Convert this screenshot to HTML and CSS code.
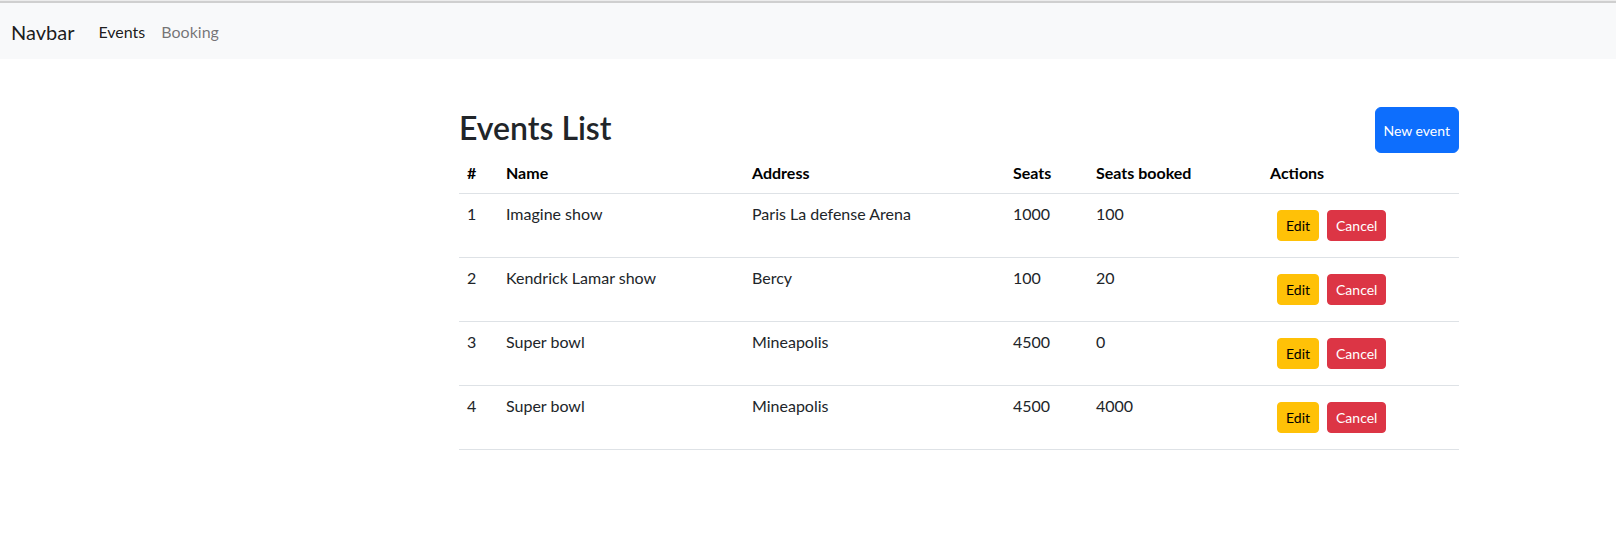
FILE: index.html
```html
<!DOCTYPE html>
<html lang="en">
<head>
<meta charset="utf-8">
<title>Events</title>
<link rel="stylesheet" href="styles.css">
</head>
<body>
<div class="topline"></div>
<nav class="navbar">
  <a class="brand" href="#">Navbar</a>
  <ul class="nav">
    <li><a class="nav-link active" href="#">Events</a></li>
    <li><a class="nav-link" href="#">Booking</a></li>
  </ul>
</nav>
<main class="page">
  <div class="content">
    <div class="title-row">
      <h2 class="title">Events List</h2>
      <button class="btn btn-primary">New event</button>
    </div>
    <table class="table">
      <colgroup>
        <col class="c-num"><col class="c-name"><col class="c-addr"><col class="c-seats"><col class="c-booked"><col class="c-actions">
      </colgroup>
      <thead>
        <tr><th>#</th><th>Name</th><th>Address</th><th>Seats</th><th>Seats booked</th><th>Actions</th></tr>
      </thead>
      <tbody>
        <tr><td>1</td><td>Imagine show</td><td>Paris La defense Arena</td><td>1000</td><td>100</td><td><div class="actions"><button class="btn btn-sm btn-warning">Edit</button><button class="btn btn-sm btn-danger">Cancel</button></div></td></tr>
        <tr><td>2</td><td>Kendrick Lamar show</td><td>Bercy</td><td>100</td><td>20</td><td><div class="actions"><button class="btn btn-sm btn-warning">Edit</button><button class="btn btn-sm btn-danger">Cancel</button></div></td></tr>
        <tr><td>3</td><td>Super bowl</td><td>Mineapolis</td><td>4500</td><td>0</td><td><div class="actions"><button class="btn btn-sm btn-warning">Edit</button><button class="btn btn-sm btn-danger">Cancel</button></div></td></tr>
        <tr><td>4</td><td>Super bowl</td><td>Mineapolis</td><td>4500</td><td>4000</td><td><div class="actions"><button class="btn btn-sm btn-warning">Edit</button><button class="btn btn-sm btn-danger">Cancel</button></div></td></tr>
      </tbody>
    </table>
  </div>
</main>
</body>
</html>
```

FILE: styles.css
```css
* { box-sizing: border-box; }
html, body { margin: 0; padding: 0; }
body {
  font-family: "Segoe UI", Lato, "Liberation Sans", Arial, sans-serif;
  font-size: 16px;
  line-height: 1.5;
  color: #212529;
  background: #fff;
}
.topline {
  height: 3px;
  border-top: 1px solid #ececec;
  background: #cfcfcf;
}
.navbar {
  display: flex;
  align-items: center;
  height: 56px;
  padding: 9px 12px 7px 11px;
  background: #f8f9fa;
}
.brand {
  font-size: 20px;
  line-height: 30px;
  padding: 5px 0;
  margin-right: 16px;
  color: rgba(0,0,0,.9);
  text-decoration: none;
}
.nav {
  display: flex;
  list-style: none;
  margin: 0;
  padding: 0;
}
.nav-link {
  display: block;
  padding: 8px 8px;
  color: rgba(0,0,0,.55);
  text-decoration: none;
}
.nav-link.active { color: rgba(0,0,0,.9); }

.page {
  padding: 48px 0 0 459px;
}
.content { width: 1000px; }
.title-row {
  display: flex;
  justify-content: space-between;
  align-items: center;
}
.title {
  margin: 0;
  font-size: 32px;
  font-weight: 600;
  line-height: 1.2;
  padding-bottom: 4px;
}
.btn {
  font-family: inherit;
  border: 1px solid transparent;
  cursor: pointer;
}
.btn-primary {
  height: 46px;
  padding: 0 8px;
  font-size: 14px;
  background: #0d6efd;
  border-color: #0d6efd;
  color: #fff;
  border-radius: 6px;
}
.table {
  width: 1000px;
  border-collapse: collapse;
  table-layout: fixed;
  color: #212529;
}
.c-num { width: 39px; }
.c-name { width: 246px; }
.c-addr { width: 261px; }
.c-seats { width: 83px; }
.c-booked { width: 174px; }
.c-actions { width: 197px; }
.table th, .table td {
  padding: 8px;
  text-align: left;
  vertical-align: top;
  border-bottom: 1px solid #dee2e6;
}
.table th { font-weight: 700; color: #000; }
.actions {
  display: flex;
  gap: 8px;
  margin: 8px 8px 8px 7px;
}
.btn-sm {
  height: 31px;
  padding: 0 8px;
  font-size: 14px;
  line-height: 21px;
  border-radius: 4px;
}
.btn-warning { background: #ffc107; border-color: #ffc107; color: #000; }
.btn-danger { background: #dc3545; border-color: #dc3545; color: #fff; }
```
